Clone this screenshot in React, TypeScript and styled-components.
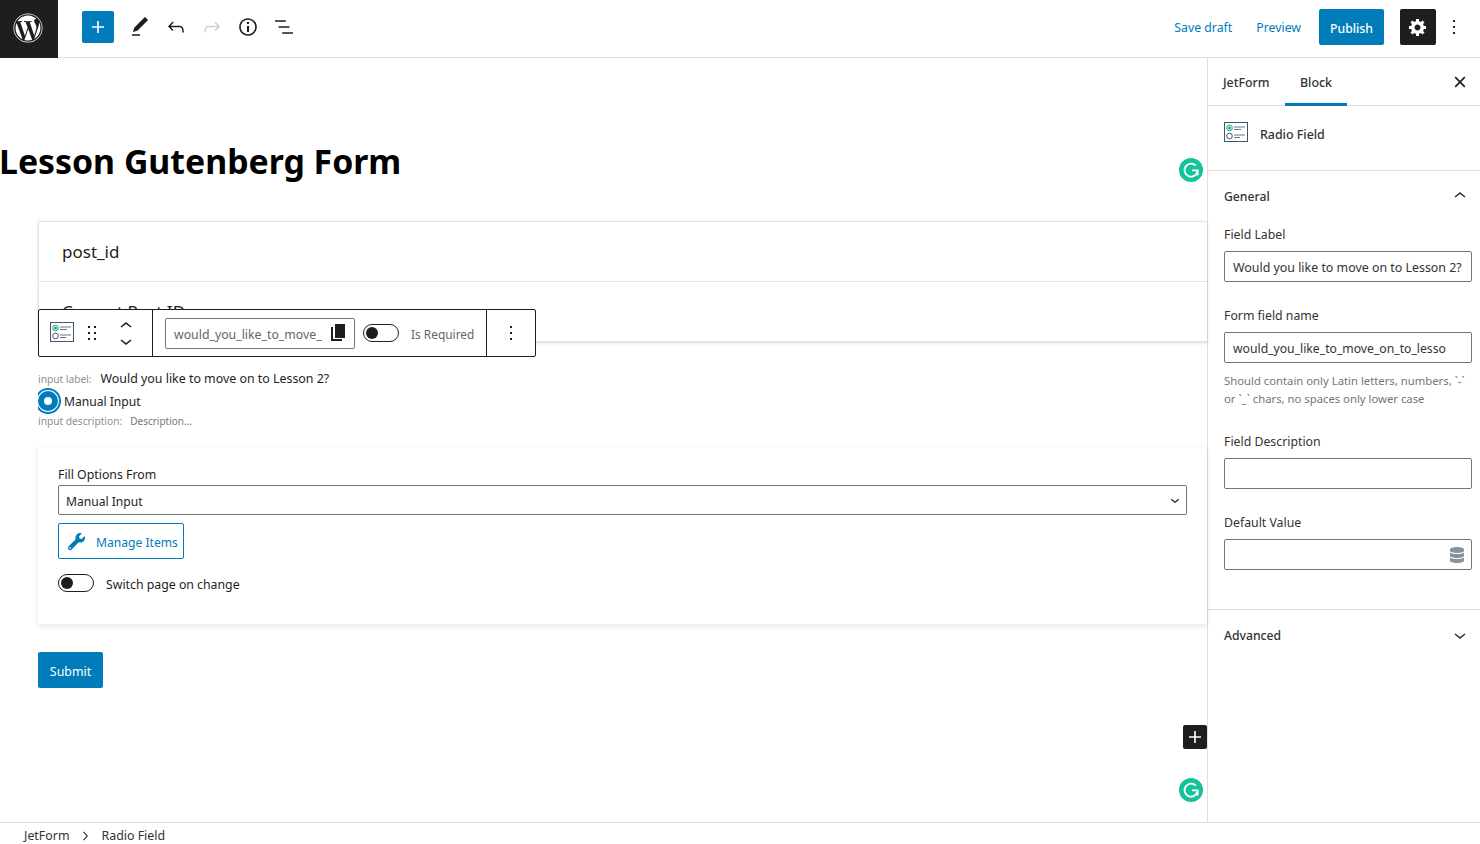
import React from 'react';
import styled, { createGlobalStyle } from 'styled-components';
import { FaWordpress, FaWrench, FaDatabase } from 'react-icons/fa';

const BLUE = '#007cba';
const DARK = '#1e1e1e';

const GlobalStyle = createGlobalStyle`
  html, body { margin: 0; padding: 0; background: #fff; }
  body { font-family: "Noto Sans", "Open Sans", sans-serif; color: ${DARK}; overflow: hidden; }
  *, *::before, *::after { box-sizing: border-box; }
`;

const WpIcon: React.FC<{ d: string; size?: number; box?: number; color?: string }> = ({ d, size = 24, box = 24, color = 'currentColor' }) => (
  <svg width={size} height={size} viewBox={`0 0 ${box} ${box}`} fill={color} style={{ display: 'block', flex: 'none' }}>
    <path d={d} />
  </svg>
);

const paths = {
  plus: 'M18 11.2h-5.2V6h-1.6v5.2H6v1.6h5.2V18h1.6v-5.2H18z',
  pencil: 'M20.1 5.1L16.9 2 6.2 12.7l-1.3 4.4 4.5-1.3L20.1 5.1zM4 20.8h8v-1.5H4v1.5z',
  undo: 'M18.3 11.7c-.6-.6-1.4-.9-2.3-.9H6.7l2.9-3.3-1.1-1-4.5 5L8.5 16l1-1-2.7-2.7H16c.5 0 .9.2 1.3.5 1 1 1 3.4 1 4.5v.3h1.5v-.2c0-1.5 0-4.3-1.5-5.7z',
  redo: 'M15.6 6.5l-1.1 1 2.9 3.3H8c-.9 0-1.7.3-2.3.9-1.4 1.5-1.4 4.2-1.4 5.6v.2h1.5v-.3c0-1.1 0-3.5 1-4.5.3-.3.7-.5 1.3-.5h9.2L14.5 15l1.1 1.1 4.6-4.6-4.6-5z',
  info: 'M12 3.2c-4.8 0-8.8 3.9-8.8 8.8 0 4.8 3.9 8.8 8.8 8.8 4.8 0 8.8-3.9 8.8-8.8 0-4.8-4-8.8-8.8-8.8zm0 16c-4 0-7.2-3.3-7.2-7.2C4.8 8 8 4.8 12 4.8s7.2 3.3 7.2 7.2c0 4-3.2 7.2-7.2 7.2zM11 17h2v-6h-2v6zm0-8h2V7h-2v2z',
  list: 'M13.8 5.2H3v1.5h10.8V5.2zm-3.6 12v1.5H21v-1.5H10.2zm7.2-6H6.6v1.5h10.8v-1.5z',
  cog: 'M18 12h-2.18c-.17.7-.44 1.35-.81 1.93l1.54 1.54-2.1 2.1-1.54-1.54c-.58.36-1.23.63-1.91.79V19H8v-2.18c-.68-.16-1.33-.43-1.91-.79l-1.54 1.54-2.12-2.12 1.54-1.54c-.36-.58-.63-1.23-.79-1.91H1V9.03h2.17c.16-.7.44-1.35.8-1.94L2.43 5.55l2.1-2.1 1.54 1.54c.58-.37 1.24-.64 1.93-.81V2h3v2.18c.68.16 1.33.43 1.91.79l1.54-1.54 2.12 2.12-1.54 1.54c.36.59.64 1.24.8 1.94H18V12zm-8.5 1.5c1.66 0 3-1.34 3-3s-1.34-3-3-3-3 1.34-3 3 1.34 3 3 3z',
  more: 'M13 19h-2v-2h2v2zm0-6h-2v-2h2v2zm0-6h-2V5h2v2z',
  drag: 'M8 7h2V5H8v2zm0 6h2v-2H8v2zm0 6h2v-2H8v2zm6-14v2h2V5h-2zm0 8h2v-2h-2v2zm0 6h2v-2h-2v2z',
  up: 'M6.5 12.4L12 8l5.5 4.4-.9 1.2L12 10l-4.500 3.600-1-1.200z',
  down: 'M17.5 11.6L12 16l-5.5-4.4.9-1.2L12 14l4.5-3.6 1 1.2z',
  right: 'M10.6 6L9.4 7l4.6 5-4.6 5 1.2 1 5.4-6z',
};

const FieldIcon: React.FC = () => (
  <svg width="24" height="20" viewBox="0 0 24 20" style={{ display: 'block', flex: 'none' }}>
    <rect x="0.5" y="0.5" width="23" height="19" fill="#fff" stroke="#44546a" />
    <circle cx="5.5" cy="6" r="2.8" fill="none" stroke="#13a883" />
    <circle cx="5.5" cy="6" r="1.5" fill="#13a883" />
    <circle cx="5.5" cy="14" r="2.8" fill="none" stroke="#44546a" />
    <path d="M10 5h11M10 7.500h7M10 13h11M10 15.500h6" stroke="#6b7787" />
  </svg>
);

const CopyIcon: React.FC = () => (
  <svg width="16" height="18" viewBox="0 0 16 18" style={{ display: 'block', flex: 'none' }}>
    <path d="M5 0h10v14H5z" fill="#1e1e1e" />
    <path d="M1 3h2v12h9v2H1z" fill="#1e1e1e" />
  </svg>
);

const CloseIcon: React.FC = () => (
  <svg width="12" height="12" viewBox="0 0 12 12" style={{ display: 'block', flex: 'none' }}>
    <path d="M1.200 1.200l9.600 9.600M10.800 1.200l-9.600 9.600" fill="none" stroke="#1e1e1e" strokeWidth="1.700" />
  </svg>
);

const GrammarlyIcon: React.FC = () => (
  <svg width="24" height="24" viewBox="0 0 24 24" style={{ display: 'block' }}>
    <circle cx="12" cy="12" r="12" fill="#15c39a" />
    <path d="M16.800 7.700a6.500 6.500 0 1 0 1.600 5.800" fill="none" stroke="#fff" strokeWidth="1.800" />
    <path d="M13 12.300h5.600v5.200" fill="none" stroke="#fff" strokeWidth="1.800" />
  </svg>
);

const Page = styled.div`
  width: 1480px;
  height: 844px;
  display: flex;
  flex-direction: column;
  position: relative;
  overflow: hidden;
`;

const TopBar = styled.header`
  height: 58px;
  flex: none;
  display: flex;
  align-items: center;
  border-bottom: 1px solid #e0e0e0;
`;

const LogoBox = styled.div`
  width: 58px;
  height: 58px;
  margin-bottom: -1px;
  padding: 0 2px 2px 0;
  background: ${DARK};
  color: #fff;
  display: flex;
  align-items: center;
  justify-content: center;
`;

const ToolGroup = styled.div`
  display: flex;
  align-items: center;
  margin-left: 24px;
`;

const InserterButton = styled.div`
  width: 32px;
  height: 32px;
  background: ${BLUE};
  color: #fff;
  border-radius: 2px;
  display: flex;
  align-items: center;
  justify-content: center;
  margin-right: 8px;
  margin-top: -3px;
`;

const ToolIcon = styled.div<{ $muted?: boolean }>`
  width: 36px;
  height: 36px;
  display: flex;
  align-items: center;
  justify-content: center;
  margin-top: -3px;
  color: ${p => (p.$muted ? '#cfcfcf' : DARK)};
`;

const TopActions = styled.div`
  margin-left: auto;
  display: flex;
  align-items: center;
  margin-top: -3px;
`;

const LinkText = styled.span<{ $gap: number }>`
  font-size: 12.3px;
  line-height: 18px;
  margin-top: 2px;
  color: ${BLUE};
  margin-right: ${p => p.$gap}px;
`;

const PublishButton = styled.div`
  width: 65px;
  height: 36px;
  padding-top: 2px;
  border-radius: 2px;
  background: ${BLUE};
  color: #fff;
  font-size: 12.2px;
  font-weight: 500;
  display: flex;
  align-items: center;
  justify-content: center;
  margin-right: 16px;
`;

const SettingsButton = styled.div`
  width: 36px;
  height: 36px;
  border-radius: 2px;
  background: ${DARK};
  color: #fff;
  display: flex;
  align-items: center;
  justify-content: center;
`;

const MoreButton = styled.div`
  width: 36px;
  height: 36px;
  margin-right: 8px;
  display: flex;
  align-items: center;
  justify-content: center;
`;

const Body = styled.div`
  flex: 1;
  min-height: 0;
  display: flex;
`;

const Canvas = styled.main`
  flex: 1;
  min-width: 0;
  position: relative;
`;

const Title = styled.h1`
  margin: 0 0 0 -1px;
  padding-top: 80px;
  font-size: 33.8px;
  line-height: 46px;
  font-weight: 700;
  color: #000;
`;

const FormArea = styled.div`
  padding: 37px 0 0 38px;
`;

const HiddenCard = styled.section`
  height: 121px;
  border: 1px solid #e2e4e7;
  border-right: 0;
  box-shadow: 0 1px 3px rgba(0, 0, 0, 0.15);
  overflow: hidden;
`;

const CardRow = styled.div`
  height: 59px;
  padding: 18px 23px 0;
  font-size: 17px;
  line-height: 24px;
  color: #222;
  & + & {
    height: 60px;
    border-top: 1px solid #e2e4e7;
  }
`;

const BlockToolbar = styled.div`
  position: absolute;
  left: 38px;
  top: 251px;
  width: 498px;
  height: 48px;
  background: #fff;
  border: 1px solid ${DARK};
  border-radius: 2px;
  display: flex;
  align-items: center;
`;

const ToolbarSection = styled.div<{ $width: number; $center?: boolean }>`
  width: ${p => p.$width}px;
  height: 100%;
  display: flex;
  align-items: center;
  justify-content: ${p => (p.$center ? 'center' : 'flex-start')};
  flex: none;
  & + & {
    border-left: 1px solid ${DARK};
  }
`;

const ToolbarIconSlot = styled.div`
  width: 24px;
  margin-left: 11px;
  margin-right: 6px;
  display: flex;
  margin-top: -2px;
`;

const MoverColumn = styled.div`
  display: flex;
  flex-direction: column;
  margin-left: 10px;
  & > svg + svg {
    margin-top: -9px;
  }
`;

const NudgedText = styled.span`
  margin-top: 2px;
`;

const NameBox = styled.div`
  width: 190px;
  height: 31px;
  margin-left: 12px;
  padding: 0 8px;
  border: 1px solid #757575;
  border-radius: 2px;
  display: flex;
  align-items: center;
  justify-content: space-between;
  font-size: 12.3px;
  color: #666;
  white-space: nowrap;
`;

const Toggle = styled.div`
  width: 36px;
  height: 18px;
  flex: none;
  border: 1px solid ${DARK};
  border-radius: 9px;
  background: #fff;
  position: relative;
  &::after {
    content: '';
    position: absolute;
    left: 2px;
    top: 2px;
    width: 12px;
    height: 12px;
    border-radius: 50%;
    background: ${DARK};
  }
`;

const RequiredToggle = styled(Toggle)`
  margin-left: 8px;
`;

const RequiredLabel = styled.span`
  font-size: 11.9px;
  color: #666;
  margin: 2px 0 0 12px;
  white-space: nowrap;
`;

const LabelRow = styled.div`
  margin-top: 27px;
  display: flex;
  align-items: baseline;
  height: 20px;
  font-size: 12.4px;
  line-height: 20px;
`;

const SmallLabel = styled.span`
  font-size: 10.2px;
  color: #8c8f94;
  margin-right: 9px;
`;

const OptionRow = styled.div`
  height: 24px;
  display: flex;
  align-items: center;
  font-size: 12.1px;
`;

const RadioDot = styled.span`
  width: 23px;
  height: 26px;
  margin-right: 3px;
  flex: none;
  overflow: hidden;
  position: relative;
  &::before {
    content: '';
    position: absolute;
    left: -3px;
    top: 0;
    width: 26px;
    height: 26px;
    border-radius: 50%;
    border: 2px solid ${BLUE};
    background: #fff;
  }
  &::after {
    content: '';
    position: absolute;
    left: 0;
    top: 3px;
    width: 20px;
    height: 20px;
    border-radius: 50%;
    border: 6px solid ${BLUE};
    background: #fff;
  }
`;

const DescRow = styled.div`
  display: flex;
  align-items: baseline;
  height: 16px;
  line-height: 16px;
`;

const DescText = styled.span`
  font-size: 10px;
  color: #777;
  margin-left: -1px;
`;

const SettingsCard = styled.section`
  margin-top: 18px;
  height: 177px;
  padding: 18px 20px 0;
  box-shadow: 0 2px 6px rgba(0, 0, 0, 0.1);
`;

const PlainLabel = styled.div`
  font-size: 12.3px;
  line-height: 18px;
  padding-top: 1px;
  margin-bottom: -1px;
`;

const SelectBox = styled.div`
  height: 30px;
  margin-top: 2px;
  padding: 2px 8px 0 7px;
  border: 1px solid #757575;
  border-radius: 2px;
  display: flex;
  align-items: center;
  justify-content: space-between;
  font-size: 12.1px;
`;

const SelectChevron = styled.span`
  margin: -2px -6px 0 0;
`;

const ManageButton = styled.div`
  width: 126px;
  height: 36px;
  margin-top: 8px;
  border: 1px solid ${BLUE};
  border-radius: 2px;
  color: ${BLUE};
  display: flex;
  align-items: center;
  padding-left: 9px;
  font-size: 12.1px;
  gap: 11px;
  white-space: nowrap;
`;

const SwitchRow = styled.div`
  margin-top: 15px;
  height: 18px;
  display: flex;
  align-items: center;
  gap: 12px;
  font-size: 12.3px;
`;

const SubmitButton = styled.div`
  margin-top: 28px;
  width: 65px;
  height: 36px;
  padding-top: 2px;
  border-radius: 2px;
  background: ${BLUE};
  color: #fff;
  font-size: 12.4px;
  display: flex;
  align-items: center;
  justify-content: center;
`;

const FloatingAdd = styled.div`
  position: absolute;
  left: 1183px;
  top: 667px;
  width: 24px;
  height: 24px;
  border-radius: 2px;
  background: ${DARK};
  color: #fff;
  display: flex;
  align-items: center;
  justify-content: center;
`;

const GrammarlyBadge = styled.div<{ $top: number }>`
  position: absolute;
  left: 1179px;
  top: ${p => p.$top}px;
`;

const Sidebar = styled.aside`
  width: 273px;
  flex: none;
  border-left: 1px solid #e0e0e0;
  color: #333;
`;

const TabBar = styled.div`
  height: 48px;
  display: flex;
  align-items: stretch;
  border-bottom: 1px solid #e0e0e0;
  padding-left: 15px;
`;

const Tab = styled.div<{ $active?: boolean; $width: number }>`
  width: ${p => p.$width}px;
  display: flex;
  align-items: center;
  justify-content: center;
  padding-top: 4px;
  font-size: 12.4px;
  font-weight: 500;
  margin-bottom: -1px;
  border-bottom: 3px solid ${p => (p.$active ? BLUE : 'transparent')};
`;

const JetFormTab = styled(Tab)`
  justify-content: flex-start;
`;

const CloseSlot = styled.div`
  margin-left: auto;
  margin-right: 14px;
  display: flex;
  align-items: center;
`;

const BlockCard = styled.div`
  height: 65px;
  padding: 16px 16px 0;
  display: flex;
  align-items: flex-start;
  gap: 12px;
  font-size: 12.4px;
  font-weight: 500;
  line-height: 24px;
  border-bottom: 1px solid #e0e0e0;
`;

const BlockName = styled.span`
  margin-top: 1px;
`;

const PanelHeader = styled.div`
  height: 52px;
  padding: 0 8px 2px 16px;
  display: flex;
  align-items: center;
  justify-content: space-between;
  font-size: 12.2px;
  font-weight: 500;
`;

const PanelBody = styled.div`
  height: 387px;
  padding: 2px 8px 0 16px;
  border-bottom: 1px solid #e0e0e0;
`;

const Field = styled.div<{ $bottom: number }>`
  margin-bottom: ${p => p.$bottom}px;
`;

const FieldLabel = styled.div`
  font-size: 12.3px;
  line-height: 18px;
  padding-top: 1px;
  margin-bottom: 7px;
`;

const InputBox = styled.div<{ $size?: number }>`
  height: 31px;
  padding: 2px 8px 0;
  border: 1px solid #757575;
  border-radius: 2px;
  font-size: ${p => p.$size ?? 12.2}px;
  display: flex;
  align-items: center;
  justify-content: space-between;
  white-space: nowrap;
  overflow: hidden;
`;

const HelpText = styled.div`
  font-size: 11.3px;
  line-height: 18px;
  color: #757575;
  margin-top: 9px;
`;

const DbIcon = styled.span`
  color: #87929d;
  display: flex;
  margin: -2px -2px 0 0;
`;

const BreadcrumbBar = styled.footer`
  height: 22px;
  flex: none;
  border-top: 1px solid #e0e0e0;
  padding: 4px 0 0 24px;
  display: flex;
  align-items: center;
  font-size: 12.4px;
  color: #333;
`;

const Crumb = styled.span`
  margin-right: 7px;
  display: flex;
`;

export default function App() {
  return (
    <Page>
      <GlobalStyle />
      <TopBar>
        <LogoBox>
          <FaWordpress size={30} />
        </LogoBox>
        <ToolGroup>
          <InserterButton>
            <WpIcon d={paths.plus} />
          </InserterButton>
          <ToolIcon><WpIcon d={paths.pencil} /></ToolIcon>
          <ToolIcon><WpIcon d={paths.undo} /></ToolIcon>
          <ToolIcon $muted><WpIcon d={paths.redo} /></ToolIcon>
          <ToolIcon><WpIcon d={paths.info} /></ToolIcon>
          <ToolIcon><WpIcon d={paths.list} /></ToolIcon>
        </ToolGroup>
        <TopActions>
          <LinkText $gap={24}>Save draft</LinkText>
          <LinkText $gap={18}>Preview</LinkText>
          <PublishButton>Publish</PublishButton>
          <SettingsButton>
            <WpIcon d={paths.cog} size={20} box={20} />
          </SettingsButton>
          <MoreButton><WpIcon d={paths.more} /></MoreButton>
        </TopActions>
      </TopBar>

      <Body>
        <Canvas>
          <Title>Lesson Gutenberg Form</Title>
          <FormArea>
            <HiddenCard>
              <CardRow>post_id</CardRow>
              <CardRow>Current Post ID</CardRow>
            </HiddenCard>
            <LabelRow>
              <SmallLabel>input label:</SmallLabel>
              Would you like to move on to Lesson 2?
            </LabelRow>
            <OptionRow>
              <RadioDot />
              Manual Input
            </OptionRow>
            <DescRow>
              <SmallLabel>input description:</SmallLabel>
              <DescText>Description...</DescText>
            </DescRow>
            <SettingsCard>
              <PlainLabel>Fill Options From</PlainLabel>
              <SelectBox>
                Manual Input
                <SelectChevron><WpIcon d={paths.down} size={18} /></SelectChevron>
              </SelectBox>
              <ManageButton>
                <FaWrench size={17} />
                <NudgedText>Manage Items</NudgedText>
              </ManageButton>
              <SwitchRow>
                <Toggle />
                <NudgedText>Switch page on change</NudgedText>
              </SwitchRow>
            </SettingsCard>
            <SubmitButton>Submit</SubmitButton>
          </FormArea>

          <BlockToolbar>
            <ToolbarSection $width={113}>
              <ToolbarIconSlot><FieldIcon /></ToolbarIconSlot>
              <WpIcon d={paths.drag} />
              <MoverColumn>
                <WpIcon d={paths.up} />
                <WpIcon d={paths.down} />
              </MoverColumn>
            </ToolbarSection>
            <ToolbarSection $width={334}>
              <NameBox>
                <NudgedText>would_you_like_to_move_</NudgedText>
                <CopyIcon />
              </NameBox>
              <RequiredToggle />
              <RequiredLabel>Is Required</RequiredLabel>
            </ToolbarSection>
            <ToolbarSection $width={49} $center>
              <WpIcon d={paths.more} size={24} />
            </ToolbarSection>
          </BlockToolbar>

          <GrammarlyBadge $top={100}><GrammarlyIcon /></GrammarlyBadge>
          <FloatingAdd><WpIcon d={paths.plus} /></FloatingAdd>
          <GrammarlyBadge $top={720}><GrammarlyIcon /></GrammarlyBadge>
        </Canvas>

        <Sidebar>
          <TabBar>
            <JetFormTab $width={62}>JetForm</JetFormTab>
            <Tab $active $width={62}>Block</Tab>
            <CloseSlot><CloseIcon /></CloseSlot>
          </TabBar>
          <BlockCard>
            <FieldIcon />
            <BlockName>Radio Field</BlockName>
          </BlockCard>
          <PanelHeader>
            General
            <WpIcon d={paths.up} />
          </PanelHeader>
          <PanelBody>
            <Field $bottom={24}>
              <FieldLabel>Field Label</FieldLabel>
              <InputBox $size={12.4}>Would you like to move on to Lesson 2?</InputBox>
            </Field>
            <Field $bottom={24}>
              <FieldLabel>Form field name</FieldLabel>
              <InputBox>would_you_like_to_move_on_to_lesso</InputBox>
              <HelpText>
                Should contain only Latin letters, numbers, `-`
                <br />
                or `_` chars, no spaces only lower case
              </HelpText>
            </Field>
            <Field $bottom={24}>
              <FieldLabel>Field Description</FieldLabel>
              <InputBox />
            </Field>
            <Field $bottom={0}>
              <FieldLabel>Default Value</FieldLabel>
              <InputBox>
                <span />
                <DbIcon><FaDatabase size={16} /></DbIcon>
              </InputBox>
            </Field>
          </PanelBody>
          <PanelHeader>
            Advanced
            <WpIcon d={paths.down} />
          </PanelHeader>
        </Sidebar>
      </Body>

      <BreadcrumbBar>
        <Crumb>JetForm</Crumb>
        <Crumb><WpIcon d={paths.right} size={18} /></Crumb>
        <Crumb>Radio Field</Crumb>
      </BreadcrumbBar>
    </Page>
  );
}
